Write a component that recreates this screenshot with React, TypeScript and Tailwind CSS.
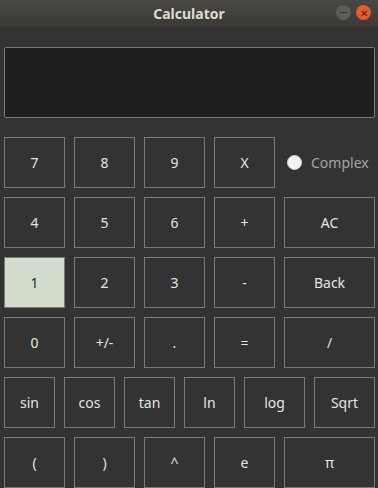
type Key = { label: string; w: string; active?: boolean }

const rows: Key[][] = [
  [
    { label: '4', w: 'w-[61px]' },
    { label: '5', w: 'w-[61px]' },
    { label: '6', w: 'w-[61px]' },
    { label: '+', w: 'w-[61px]' },
    { label: 'AC', w: 'w-[91px]' },
  ],
  [
    { label: '1', w: 'w-[61px]', active: true },
    { label: '2', w: 'w-[61px]' },
    { label: '3', w: 'w-[61px]' },
    { label: '-', w: 'w-[61px]' },
    { label: 'Back', w: 'w-[91px]' },
  ],
  [
    { label: '0', w: 'w-[61px]' },
    { label: '+/-', w: 'w-[61px]' },
    { label: '.', w: 'w-[61px]' },
    { label: '=', w: 'w-[61px]' },
    { label: '/', w: 'w-[91px]' },
  ],
  [
    { label: 'sin', w: 'w-[51px]' },
    { label: 'cos', w: 'w-[51px]' },
    { label: 'tan', w: 'w-[51px]' },
    { label: 'ln', w: 'w-[51px]' },
    { label: 'log', w: 'w-[61px]' },
    { label: 'Sqrt', w: 'w-[61px]' },
  ],
  [
    { label: '(', w: 'w-[61px]' },
    { label: ')', w: 'w-[61px]' },
    { label: '^', w: 'w-[61px]' },
    { label: 'e', w: 'w-[61px]' },
    { label: 'π', w: 'w-[91px]' },
  ],
]

function CalcKey({ k }: { k: Key }): JSX.Element {
  return (
    <button
      className={`${k.w} h-[51px] shrink-0 border border-[#7a7a7a] text-[14px] ${
        k.active ? 'bg-[#d2dccd] text-[#2a2a2a]' : 'bg-[#333333] text-[#e4e4e4]'
      }`}
    >
      {k.label}
    </button>
  )
}

export default function App(): JSX.Element {
  return (
    <div className="w-[378px] h-[488px] overflow-hidden bg-[#333333] font-['Noto_Sans',sans-serif]">
      <div className="relative h-[27px] flex items-center justify-center bg-gradient-to-b from-[#4a4843] to-[#3a3935]">
        <span className="text-[14px] font-bold text-[#dfdbd2]">Calculator</span>
        <div className="absolute right-[7px] top-[5px] flex gap-[5px]">
          <div className="w-[15px] h-[15px] rounded-full bg-[#5d5c58] flex items-center justify-center">
            <div className="w-[7px] h-[1px] bg-[#3a3935]" />
          </div>
          <div className="w-[15px] h-[15px] rounded-full bg-[#e9592e] flex items-center justify-center text-[#3a2a22] text-[10px] leading-none">
            ✕
          </div>
        </div>
      </div>

      <div className="px-[4px] pt-[20px]">
        <div className="w-[371px] h-[71px] rounded-[2px] border border-[#7a7a7a] bg-[#1f1f1f]" />

        <div className="mt-[19px] flex flex-col gap-[9px]">
          <div className="flex gap-[9px]">
            <CalcKey k={{ label: '7', w: 'w-[61px]' }} />
            <CalcKey k={{ label: '8', w: 'w-[61px]' }} />
            <CalcKey k={{ label: '9', w: 'w-[61px]' }} />
            <CalcKey k={{ label: 'X', w: 'w-[61px]' }} />
            <div className="flex items-center gap-[9px] pl-[3px]">
              <span className="w-[15px] h-[15px] rounded-full bg-[#f4f4f4] border border-[#cfcfcf]" />
              <span className="text-[14px] text-[#a3a3a3]">Complex</span>
            </div>
          </div>
          {rows.map((row, i) => (
            <div key={i} className="flex gap-[9px]">
              {row.map((k) => (
                <CalcKey key={k.label} k={k} />
              ))}
            </div>
          ))}
        </div>
      </div>
    </div>
  )
}
